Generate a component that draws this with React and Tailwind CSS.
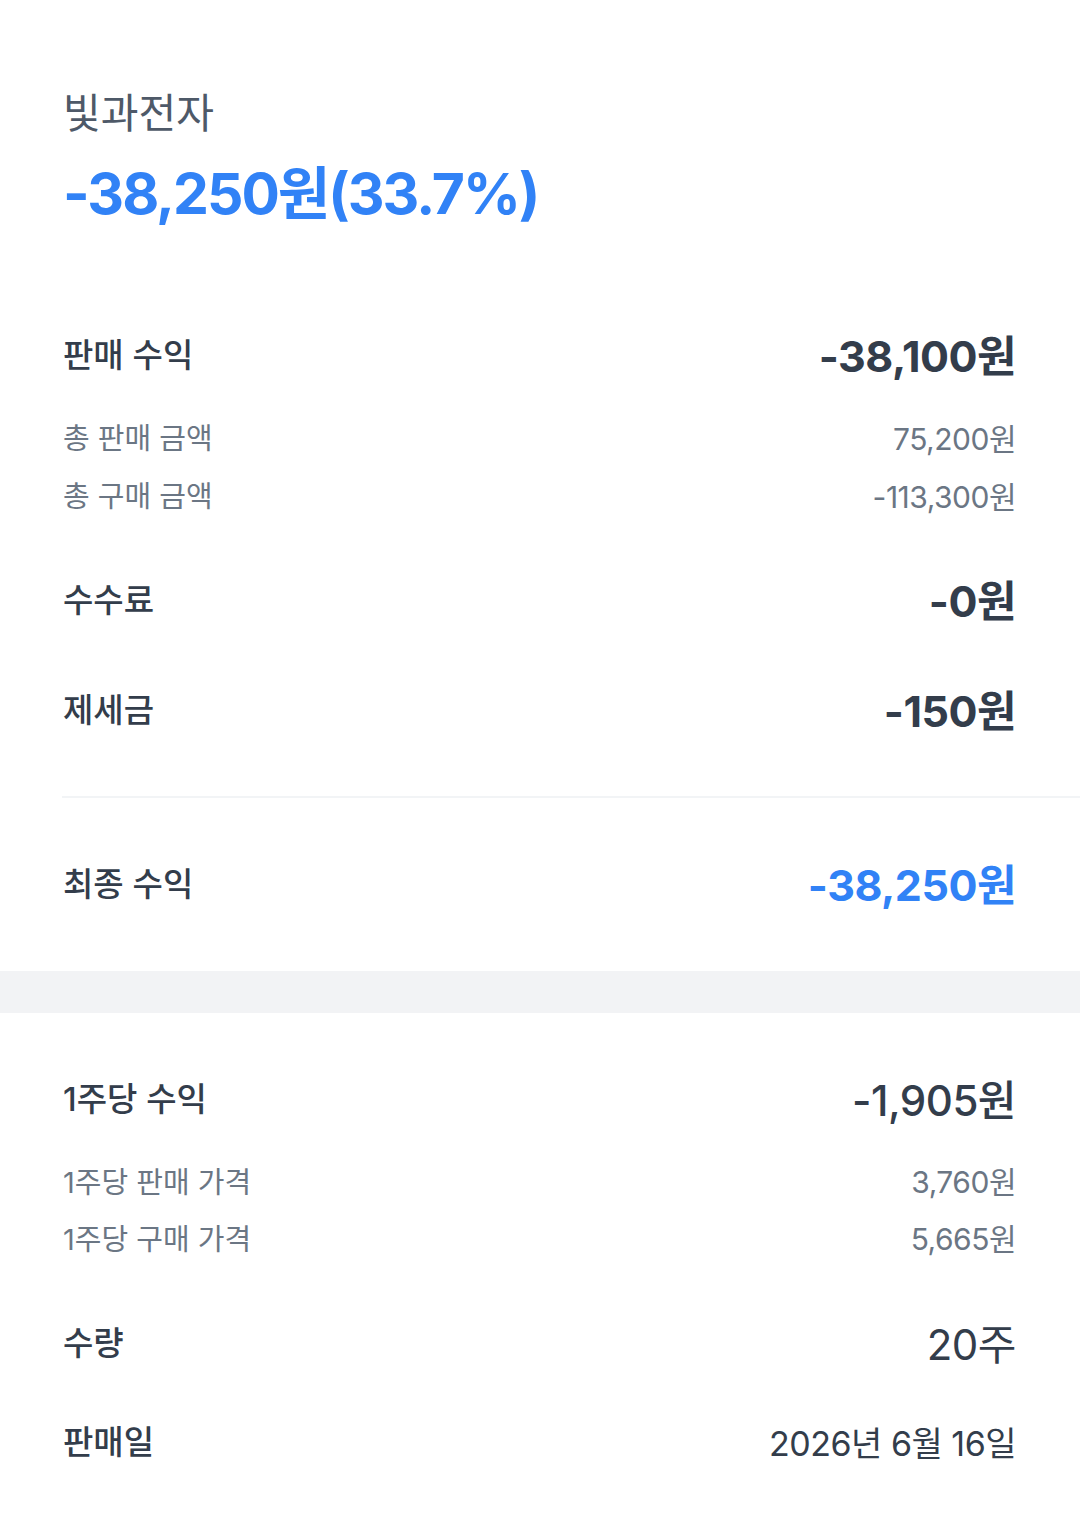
import React from "react";

const FONT = "font-['Inter',_'Noto_Sans_CJK_KR',_sans-serif]";

function Row({ label, value, className, labelClass, valueClass }) {
  return (
    <div className={`flex items-center justify-between ${className}`}>
      <span className={labelClass}>{label}</span>
      <span className={valueClass}>{value}</span>
    </div>
  );
}

export default function App() {
  const mainLabel = "text-[33px] font-medium text-[#333d4b]";
  const subLabel = "text-[29px] text-[#6b7684]";
  const subValue = "text-[30px] text-[#6b7684] tracking-[-0.5px]";
  const boldValue = "text-[43px] font-bold text-[#333d4b] tracking-[-0.5px]";

  return (
    <div className={`w-[1080px] min-h-[1519px] bg-white ${FONT}`}>
      {/* Header */}
      <div className="pl-[63px] pr-[64px] pt-[86px]">
        <div className="text-[41px] leading-[54px] text-[#4e5968]">
          빛과전자
        </div>
        <div className="mt-[18px] text-[57px] leading-[72px] font-bold text-[#3182f6] tracking-[-2px]">
          -38,250원(33.7%)
        </div>
      </div>

      {/* 판매 수익 */}
      <div className="pl-[63px] pr-[64px] mt-[96px]">
        <Row
          className="h-[60px]"
          label="판매 수익"
          value="-38,100원"
          labelClass={mainLabel}
          valueClass={boldValue}
        />
        <Row
          className="h-[58px] mt-[24px]"
          label="총 판매 금액"
          value="75,200원"
          labelClass={subLabel}
          valueClass={subValue}
        />
        <Row
          className="h-[58px]"
          label="총 구매 금액"
          value="-113,300원"
          labelClass={subLabel}
          valueClass={subValue}
        />
        <Row
          className="h-[60px] mt-[45px]"
          label="수수료"
          value="-0원"
          labelClass={mainLabel}
          valueClass={boldValue}
        />
        <Row
          className="h-[60px] mt-[50px]"
          label="제세금"
          value="-150원"
          labelClass={mainLabel}
          valueClass={boldValue}
        />
      </div>

      <div className="ml-[62px] mt-[55px] h-[2px] bg-[#f2f4f6]" />

      <div className="pl-[63px] pr-[64px] mt-[57px]">
        <Row
          className="h-[60px]"
          label="최종 수익"
          value="-38,250원"
          labelClass={mainLabel}
          valueClass="text-[43px] font-bold text-[#3182f6] tracking-[-0.5px]"
        />
      </div>

      <div className="mt-[56px] h-[42px] bg-[#f2f3f5]" />

      {/* 1주당 */}
      <div className="pl-[63px] pr-[64px] mt-[57px]">
        <Row
          className="h-[60px]"
          label="1주당 수익"
          value="-1,905원"
          labelClass={mainLabel}
          valueClass="text-[42px] font-medium text-[#333d4b] tracking-[-0.5px]"
        />
        <Row
          className="h-[57px] mt-[24px]"
          label="1주당 판매 가격"
          value="3,760원"
          labelClass={subLabel}
          valueClass={subValue}
        />
        <Row
          className="h-[57px]"
          label="1주당 구매 가격"
          value="5,665원"
          labelClass={subLabel}
          valueClass={subValue}
        />
        <Row
          className="h-[60px] mt-[46px]"
          label="수량"
          value="20주"
          labelClass={mainLabel}
          valueClass="text-[42px] text-[#333d4b] tracking-[-0.5px]"
        />
        <Row
          className="h-[60px] mt-[39px]"
          label="판매일"
          value="2026년 6월 16일"
          labelClass={mainLabel}
          valueClass="text-[34px] text-[#333d4b] tracking-[-0.5px]"
        />
      </div>
    </div>
  );
}
